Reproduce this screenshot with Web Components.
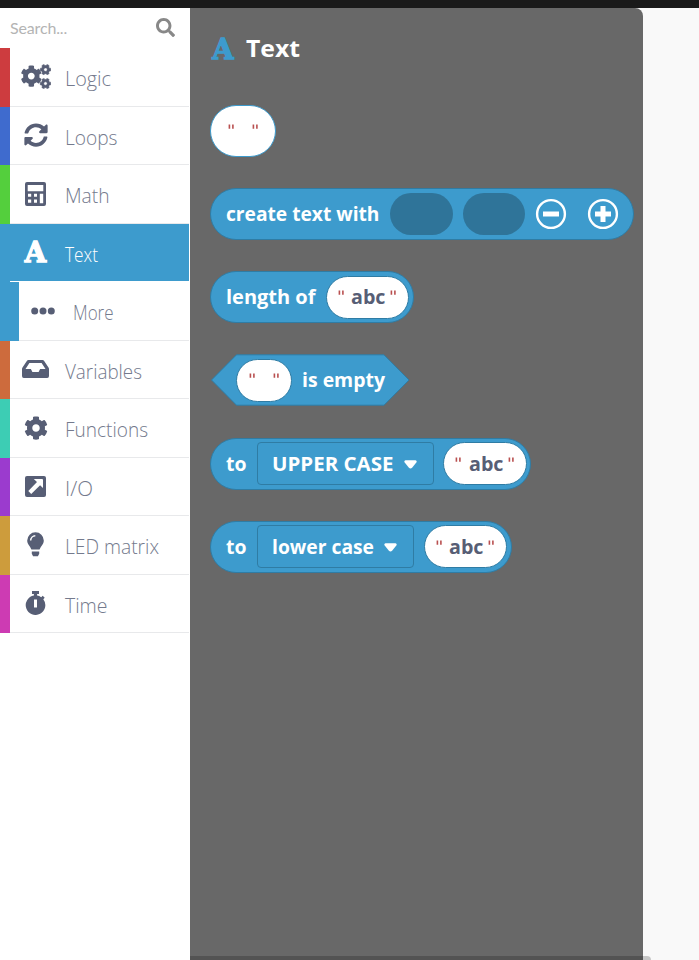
<!DOCTYPE html>
<html lang="en">
<head>
<meta charset="utf-8">
<title>Block toolbox</title>
<style>
html,body{margin:0;height:100%;overflow:hidden}
body{font-family:"Open Sans","Noto Sans",sans-serif}
</style>
</head>
<body>
<block-editor></block-editor>
<script>
const define=(name,html)=>customElements.define(name,class extends HTMLElement{
  connectedCallback(){
    if(this.shadowRoot)return;
    const root=this.attachShadow({mode:'open'});
    root.innerHTML=typeof html==='function'?html(this):html;
  }
});

/* One line of text set to a known measure. */
define('fit-label',el=>{
  const w=+el.getAttribute('w'),s=el.getAttribute('size')||20,wt=el.getAttribute('weight')||700;
  return `<style>:host{display:block;flex:none;width:${w}px;height:30px}svg{display:block;overflow:visible}
  text{font:${wt} ${s}px "Open Sans","Noto Sans",sans-serif;fill:currentColor}</style>
  <svg width="${w}" height="30"><text x="0" y="22.3" textLength="${w}" lengthAdjust="spacingAndGlyphs">${el.textContent}</text></svg>`;
});

const COG='M487.4 315.7l-42.6-24.6c4.3-23.2 4.3-47 0-70.2l42.6-24.6c4.9-2.8 7.1-8.6 5.5-14-11.1-35.6-30-67.8-54.7-94.6-3.8-4.1-10-5.1-14.8-2.3L380.8 110c-17.9-15.4-38.5-27.3-60.8-35.1V25.8c0-5.6-3.9-10.5-9.4-11.7-36.7-8.2-74.3-7.8-109.2 0-5.5 1.2-9.4 6.1-9.4 11.7V75c-22.2 7.9-42.8 19.8-60.8 35.1L88.7 85.5c-4.9-2.8-11-1.9-14.8 2.3-24.7 26.7-43.6 58.9-54.7 94.6-1.7 5.4.6 11.2 5.5 14L67.3 221c-4.3 23.2-4.3 47 0 70.2l-42.6 24.6c-4.9 2.8-7.1 8.6-5.5 14 11.1 35.6 30 67.8 54.7 94.6 3.8 4.1 10 5.1 14.8 2.3l42.6-24.6c17.9 15.4 38.5 27.3 60.8 35.1v49.2c0 5.6 3.9 10.5 9.4 11.7 36.7 8.2 74.3 7.8 109.2 0 5.5-1.2 9.4-6.1 9.4-11.7v-49.2c22.2-7.9 42.8-19.8 60.8-35.1l42.6 24.6c4.9 2.8 11 1.9 14.8-2.3 24.7-26.7 43.6-58.9 54.7-94.6 1.5-5.5-.7-11.3-5.6-14.1zM256 336c-44.1 0-80-35.9-80-80s35.9-80 80-80 80 35.9 80 80-35.9 80-80 80z';
const svg=(w,h,vb,body)=>`<svg width="${w}" height="${h}" viewBox="${vb}" fill="currentColor">${body}</svg>`;
const ICONS={
  search:svg(19,19,'0 0 512 512','<path d="M505 442.7L405.3 343c-4.5-4.5-10.6-7-17-7H372c27.6-35.3 44-79.7 44-128C416 93.1 322.9 0 208 0S0 93.1 0 208s93.1 208 208 208c48.3 0 92.7-16.4 128-44v16.3c0 6.4 2.5 12.5 7 17l99.7 99.7c9.4 9.4 24.6 9.4 33.9 0l28.3-28.3c9.4-9.4 9.4-24.6.1-34zM208 336c-70.7 0-128-57.2-128-128 0-70.7 57.2-128 128-128 70.7 0 128 57.2 128 128 0 70.7-57.2 128-128 128z"/>'),
  cogs:svg(30,25,'0 0 30 25',`<path transform="translate(-.6 1.2) scale(.0426)" d="${COG}"/><g stroke="currentColor" stroke-width="22"><path transform="translate(19 .1) rotate(30 5.5 5.5) scale(.0215)" d="${COG}"/><path transform="translate(19 14) rotate(30 5.5 5.5) scale(.0215)" d="${COG}"/></g>`),
  sync:svg(24,24,'0 0 512 512','<path d="M370.72 133.28C339.458 104.008 298.888 87.962 255.848 88c-77.458.068-144.328 53.178-162.791 126.85-1.344 5.363-6.122 9.15-11.651 9.15H24.103c-7.498 0-13.194-6.807-11.807-14.176C33.933 94.924 134.813 8 256 8c66.448 0 126.791 26.136 171.315 68.685L463.03 40.97C478.149 25.851 504 36.559 504 57.941V192c0 13.255-10.745 24-24 24H345.941c-21.382 0-32.09-25.851-16.971-40.971l41.75-41.749zM32 296h134.059c21.382 0 32.09 25.851 16.971 40.971l-41.75 41.75c31.262 29.273 71.835 45.319 114.876 45.28 77.418-.07 144.315-53.144 162.787-126.849 1.344-5.363 6.122-9.15 11.651-9.15h57.304c7.498 0 13.194 6.807 11.807 14.176C478.067 417.076 377.187 504 256 504c-66.448 0-126.791-26.136-171.315-68.685L48.97 471.03C33.851 486.149 8 475.441 8 454.059V320c0-13.255 10.745-24 24-24z"/>'),
  calc:svg(21,24,'0 0 21 24','<path fill-rule="evenodd" d="M2 0H19a2 2 0 0 1 2 2V22a2 2 0 0 1-2 2H2a2 2 0 0 1-2-2V2A2 2 0 0 1 2 0ZM2.7 3V9.2H18.3V3ZM3 11.8V14.8H6.2V11.8ZM9 11.8V14.8H12V11.8ZM14.8 11.8V21.3H18.2V11.8ZM3 17.6V20.8H6.2V17.6ZM9 17.6V20.8H12V17.6Z"/>'),
  dots:svg(24,8,'0 0 24 8','<circle cx="3.7" cy="4" r="3.5"/><circle cx="12" cy="4" r="3.5"/><circle cx="20.3" cy="4" r="3.5"/>'),
  inbox:svg(27,18,'0 0 27 18','<path fill-rule="evenodd" d="M6.4 0H20.6Q21.5 0 22 .7L26.5 7.6Q27 8.3 27 9V16Q27 18 25.2 18H1.8Q0 18 0 16V9Q0 8.3 .5 7.6L5 .7Q5.5 0 6.4 0ZM7.4 3L3.5 9H8.9L10.4 12H16.6L18.1 9H23.5L19.6 3Z"/>'),
  cog:svg(24,24,'0 0 512 512',`<path d="${COG}"/>`),
  out:svg(21,21,'0 0 21 21','<rect width="21" height="21" rx="2"/><path fill="#fff" d="M8.8 3H17.1Q18 3 18 3.9V12L15.1 9.3 6.2 17.9 3.3 15 12 6.1Z"/>'),
  bulb:svg(17,25,'0 0 17 25','<path fill-rule="evenodd" d="M8.5 .2A8.3 8.3 0 0 0 .2 8.5C.2 12.3 3 13.6 4.4 17.5H12.6C14 13.6 16.8 12.3 16.8 8.5A8.3 8.3 0 0 0 8.5 .2ZM8.3 3.1V4.6A4 4 0 0 0 4.4 8.4H2.9A5.4 5.4 0 0 1 8.3 3.1Z"/><path d="M4.8 19.5H12.2V21.7L10.9 24.2H6.1L4.8 21.7Z"/>'),
  timer:svg(21,24,'0 0 21 24','<path fill-rule="evenodd" d="M7 0H14V3H12.1V4.5A10 10 0 0 1 16.2 6.2L17.7 4.8 19.7 6.8 18.3 8.2A9.8 9.8 0 1 1 8.9 4.5V3H7ZM9 8.4V16.5H12V8.4Z"/>')
};
define('tool-icon',el=>{
  const n=el.getAttribute('name');
  return `<style>:host{display:flex;align-items:center;justify-content:center;flex:none}svg{display:block}
  b{font:700 27.5px/24px "DejaVu Serif",serif;display:block;height:24px;-webkit-text-stroke:1.3px currentColor;stroke-linejoin:round}</style>${n==='letter'?'<b>A</b>':ICONS[n]}`;
});

define('search-box',`<style>:host{display:flex;height:40px;box-sizing:border-box;padding:0 15px 1px 10px;align-items:center;justify-content:space-between;color:#888}
span{font:16px "Lato",sans-serif;color:#b4b4b4;letter-spacing:-.15px}</style><span>Search...</span><tool-icon name="search"></tool-icon>`);

define('category-row',el=>{
  const sel=el.hasAttribute('selected'),sub=el.hasAttribute('sub'),c=el.getAttribute('color');
  return `<style>:host{display:flex;flex:1 1 0;min-height:0;box-sizing:border-box;width:189px;color:${sel?'#fff':'#575e75'};background:${sel?c:'#fff'}}
  i{flex:none;width:${sub?19:10}px;background:${c}}
  div{flex:1;display:flex;align-items:flex-start;border-bottom:1px solid ${sel?'#fff':'#e8e9eb'};box-sizing:border-box}
  tool-icon{width:${sub?48:51}px;height:24px;margin-top:16.5px}
  fit-label{margin:16.3px 0 0 ${sub?6:4}px;color:${sel?'#fff':'#747a8d'}}</style>
  <i></i><div><tool-icon name="${el.getAttribute('icon')}"></tool-icon><fit-label w="${el.getAttribute('w')}" weight="300">${el.textContent}</fit-label></div>`;
});

define('tool-box',`<style>:host{display:flex;flex-direction:column;width:190px;background:#fff;flex:none}
nav{display:flex;flex-direction:column;height:585px}</style>
<search-box></search-box><nav>
<category-row color="#cd3c3f" icon="cogs" w="46">Logic</category-row>
<category-row color="#3f6bce" icon="sync" w="52.5">Loops</category-row>
<category-row color="#54cf3d" icon="calc" w="44.5">Math</category-row>
<category-row color="#3d9bcd" icon="letter" w="33" selected>Text</category-row>
<category-row color="#3d9bcd" icon="dots" w="40.5" sub>More</category-row>
<category-row color="#cd6b3d" icon="inbox" w="77">Variables</category-row>
<category-row color="#3dcdb4" icon="cog" w="83">Functions</category-row>
<category-row color="#9b3bce" icon="out" w="28">I/O</category-row>
<category-row color="#cd9c3c" icon="bulb" w="94">LED matrix</category-row>
<category-row color="#cd3bb3" icon="timer" w="42.5">Time</category-row>
</nav>`);

/* Rounded reporter block, or a hexagonal boolean one. */
define('code-block',el=>{
  const w=el.getAttribute('w');
  return el.hasAttribute('hex')
  ?`<style>:host{display:grid;width:${w}px;height:52px;color:#fff}svg,div{grid-area:1/1}div{display:flex;align-items:center;padding-left:26px;z-index:1}</style>
  <svg width="${w}" height="52"><path d="M1.5 26L26.5 .8H${w-26}L${w-1} 26L${w-26} 51.2H26.5Z" fill="#3d9bcd" stroke="#2f7ca4"/></svg><div><slot></slot></div>`
  :`<style>:host{display:flex;align-items:center;box-sizing:border-box;width:${w}px;height:52px;border:1px solid #2f7ca4;border-radius:26px;background:#3d9bcd;color:#fff;padding-left:15px}</style><slot></slot>`;
});
define('empty-input',`<style>:host{display:block;flex:none;width:62.5px;height:42px;border-radius:21px;background:#2f7499}</style>`);
define('text-value',el=>{
  const t=el.textContent,big=el.hasAttribute('big'),w=big?66:t?83.5:55.5;
  return `<style>:host{display:flex;flex:none;box-sizing:border-box;width:${w}px;height:${big?52:43}px;border-radius:26px;border:1px solid ${big?'#3d9bcd':'#2f7ca4'};background:#fff;align-items:center;justify-content:center;color:#575e75}
  svg{display:block;width:7px;height:30px;fill:none;stroke:#b95050;stroke-width:1.6}
  span{width:17px}fit-label{margin:0 4.5px 0 6.5px}</style>
  <svg viewBox="0 0 7 30"><path d="M1.4 8.6V12.8M4.9 8.6V12.8"/></svg>${t?`<fit-label w="34.5" size="20">${t}</fit-label>`:'<span></span>'}<svg viewBox="0 0 7 30"><path d="M1.4 8.6V12.8M4.9 8.6V12.8"/></svg>`;
});
define('drop-field',el=>`<style>:host{display:flex;align-items:center;flex:none;box-sizing:border-box;width:${el.getAttribute('w')}px;height:43px;border:1px solid #2f7ca4;border-radius:4px;padding:0 16px 0 14px;justify-content:space-between}svg{margin-top:1px}</style>
<fit-label w="${el.getAttribute('tw')}">${el.textContent}</fit-label><svg width="13" height="9"><path d="M1.5 .3H11.5Q13.4 .8 12.3 2.6L8.3 7.5Q6.5 9.3 4.7 7.5L.7 2.6Q-.4 .8 1.5 .3Z" fill="#fff"/></svg>`);
define('round-button',el=>`<style>:host{display:block;flex:none;width:32px;height:32px}svg{display:block}</style>
<svg width="32" height="32" stroke="#fff" fill="none"><circle cx="16" cy="16" r="13.9" stroke-width="2.4"/><path d="M8 16H24${el.hasAttribute('plus')?'M16 8V24':''}" stroke-width="5"/></svg>`);

define('block-flyout',`<style>:host{display:flex;flex-direction:column;align-items:flex-start;box-sizing:border-box;width:453px;flex:none;background:#686868;border-radius:0 8px 0 0;padding:25px 0 0 20.4px}
header{display:flex;align-items:center;height:30px;margin-bottom:41.5px}
header tool-icon{color:#3d9bcd;width:25px;margin-top:1px}header fit-label{color:#fff;margin:4px 0 0 11px}
section{display:flex;flex-direction:column;gap:31.25px}</style>
<header><tool-icon name="letter"></tool-icon><fit-label w="54" size="24">Text</fit-label></header>
<section>
<text-value big></text-value>
<code-block w="424"><fit-label w="153.5">create text with</fit-label><empty-input style="margin-left:10.3px"></empty-input><empty-input style="margin-left:10px"></empty-input><round-button style="margin-left:10px"></round-button><round-button plus style="margin-left:20px"></round-button></code-block>
<code-block w="204"><fit-label w="89.5">length of</fit-label><text-value style="margin-left:9.7px">abc</text-value></code-block>
<code-block w="200" hex><text-value></text-value><fit-label w="83" style="margin-left:10.5px">is empty</fit-label></code-block>
<code-block w="321"><fit-label w="20.5">to</fit-label><drop-field w="177" tw="121.5" style="margin-left:9.7px">UPPER CASE</drop-field><text-value style="margin-left:9.7px">abc</text-value></code-block>
<code-block w="302"><fit-label w="20.5">to</fit-label><drop-field w="157.5" tw="102" style="margin-left:9.7px">lower case</drop-field><text-value style="margin-left:9.9px">abc</text-value></code-block>
</section>`);

define('block-editor',`<style>:host{display:flex;flex-direction:column;height:960px;width:699px;background:#f9f9f9}
.bar{height:8px;background:#1a1a1a;flex:none}main{flex:1;display:flex;position:relative}
.thumb{position:absolute;left:190px;bottom:0;width:461px;height:4px;background:#0003;border-radius:0 4px 0 0}</style>
<div class="bar"></div><main><tool-box></tool-box><block-flyout></block-flyout><div class="thumb"></div></main>`);
</script>
</body>
</html>
